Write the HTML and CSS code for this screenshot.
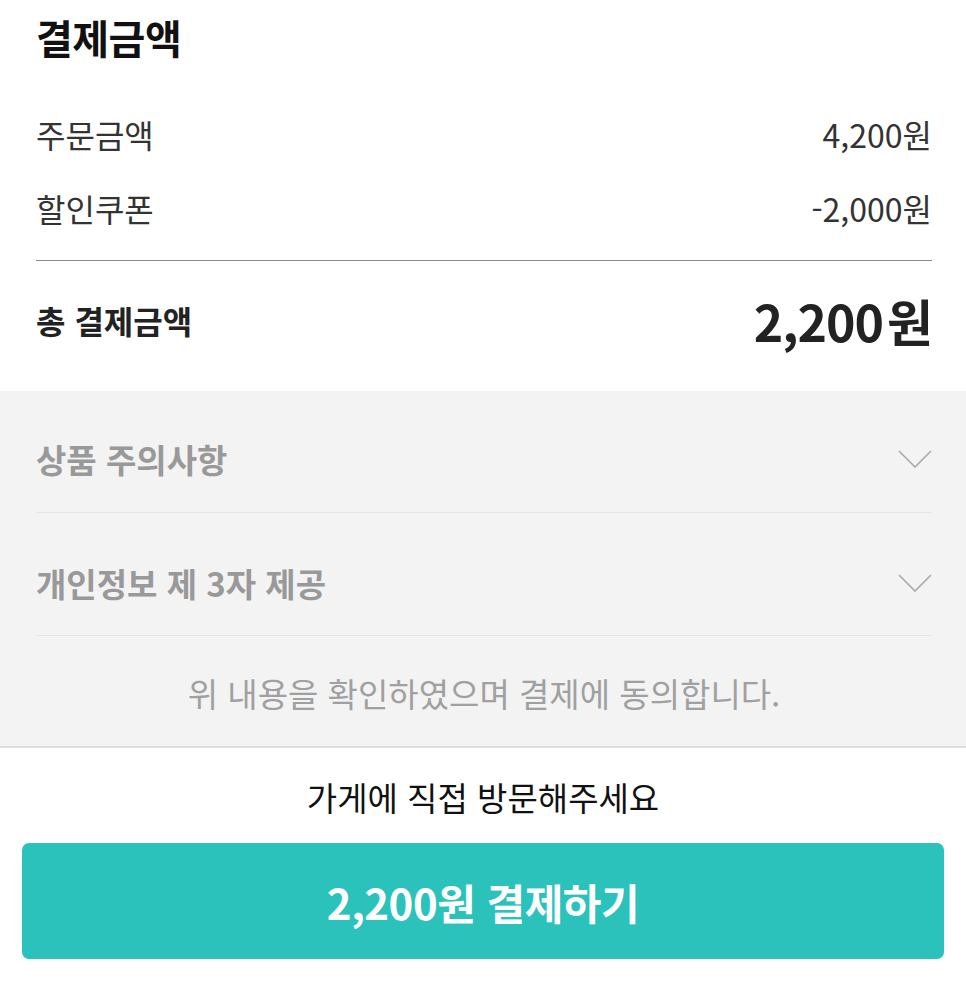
FILE: index.html
```html
<!DOCTYPE html>
<html lang="ko">
<head>
<meta charset="utf-8">
<link rel="stylesheet" href="styles.css">
</head>
<body>
<section class="summary">
  <h2 class="title">결제금액</h2>
  <div class="row first"><span>주문금액</span><span>4,200원</span></div>
  <div class="row"><span>할인쿠폰</span><span>-2,000원</span></div>
  <div class="total"><span class="total-label">총 결제금액</span><span class="total-value">2,200<span class="won">원</span></span></div>
</section>
<section class="terms">
  <div class="term"><span>상품 주의사항</span>
    <svg class="chev" width="34" height="18" viewBox="0 0 34 18"><path d="M1 1 L17 17 L33 1" fill="none" stroke="#a9a9a9" stroke-width="1.6"/></svg>
  </div>
  <div class="term second"><span>개인정보 제 3자 제공</span>
    <svg class="chev" width="34" height="18" viewBox="0 0 34 18"><path d="M1 1 L17 17 L33 1" fill="none" stroke="#a9a9a9" stroke-width="1.6"/></svg>
  </div>
  <p class="agree">위 내용을 확인하였으며 결제에 동의합니다.</p>
</section>
<section class="footer">
  <p class="visit">가게에 직접 방문해주세요</p>
  <button class="pay">2,200원 결제하기</button>
</section>
</body>
</html>
```
FILE: styles.css
```css
html, body { margin: 0; padding: 0; background: #fff; }
body { font-family: "Noto Sans CJK KR", "Noto Sans", sans-serif; color: #222; width: 966px; }
.summary { padding: 0 34px 0 36px; }
.title { margin: 0; padding-top: 8px; font-size: 40px; font-weight: 700; line-height: 58px; color: #111; letter-spacing: -0.5px; }
.row { display: flex; justify-content: space-between; font-size: 32px; line-height: 46px; color: #333; }
.row.first { margin-top: 45px; }
.row + .row { margin-top: 28px; }
.total { display: flex; justify-content: space-between; align-items: center; border-top: 1.5px solid #8a8a8a; margin-top: 29px; height: 118px; padding-bottom: 12px; }
.total-label { font-size: 32px; font-weight: 700; color: #222; }
.total-value { font-size: 50px; font-weight: 700; color: #222; letter-spacing: -1px; }
.won { margin-left: 4px; }
.terms { background: #f3f3f3; padding: 0 34px 0 36px; border-bottom: 2px solid #dedede; }
.term { display: flex; justify-content: space-between; align-items: center; height: 122px; box-sizing: border-box; padding-top: 14px; border-bottom: 1.5px solid #e6e6e6; font-size: 33px; font-weight: 700; color: #999; }
.term.second { height: 123px; padding-top: 18px; }
.agree { margin: 0; text-align: center; font-size: 33px; color: #a0a0a0; line-height: 46px; padding: 34px 0 30px; }
.footer { padding: 0 22px; text-align: center; }
.visit { margin: 0; font-size: 33px; line-height: 46px; color: #111; padding: 26px 0 23px; }
.pay { display: block; width: 100%; height: 116px; border: 0; border-radius: 7px; background: #2cc2bc; color: #fff; font-family: inherit; font-size: 42px; font-weight: 700; letter-spacing: -0.5px; }
```
